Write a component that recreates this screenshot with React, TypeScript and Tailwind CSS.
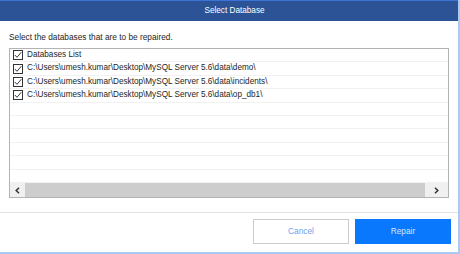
import React from 'react'

const paths = [
  'C:\\Users\\umesh.kumar\\Desktop\\MySQL Server 5.6\\data\\demo\\',
  'C:\\Users\\umesh.kumar\\Desktop\\MySQL Server 5.6\\data\\incidents\\',
  'C:\\Users\\umesh.kumar\\Desktop\\MySQL Server 5.6\\data\\op_db1\\',
]

function Check() {
  return (
    <span className="flex h-[10px] w-[10px] shrink-0 items-center justify-center border border-[#333] bg-white">
      <svg width="8" height="8" viewBox="0 0 8 8" fill="none">
        <path d="M0.8 4 L3 6.3 L7.3 1.2" stroke="#222" strokeWidth="0.9" />
      </svg>
    </span>
  )
}

function Chevron({ left }: { left?: boolean }) {
  return (
    <svg width="5" height="7" viewBox="0 0 5 7" fill="none">
      <path d={left ? 'M4 0.8 L1.2 3.5 L4 6.2' : 'M1 0.8 L3.8 3.5 L1 6.2'} stroke="#333" strokeWidth="1.5" />
    </svg>
  )
}

export default function App() {
  const rows = ['Databases List', ...paths]
  return (
    <div className="flex h-[254px] w-[460px] flex-col overflow-hidden border-r-2 border-b-2 border-[#a9cbf2] bg-white font-['Liberation_Sans',sans-serif] text-[#1e1e1e]">
      <div className="flex h-[21px] shrink-0 items-center justify-center border-t border-[#3d72d6] bg-[#2b5396] pl-[11px] text-[8.2px] text-white">
        Select Database
      </div>
      <div className="px-[9px] pt-[9px] text-[8.3px] leading-[14px]">Select the databases that are to be repaired.</div>
      <div className="mx-[9px] mt-[4px] flex h-[150px] flex-col border border-[#b3b3b3]">
        <div className="flex-1">
          {Array.from({ length: 10 }).map((_, i) => (
            <div key={i} className="flex h-[13.4px] items-center gap-[4px] border-b border-[#f1f1f1] pl-[3px] text-[8.2px]">
              {rows[i] !== undefined && <Check />}
              {rows[i] !== undefined && <span className="whitespace-nowrap leading-none">{rows[i]}</span>}
            </div>
          ))}
        </div>
        <div className="flex h-[14px] shrink-0 items-stretch bg-[#f0f0f0]">
          <div className="flex w-[15px] items-center justify-center">
            <Chevron left />
          </div>
          <div className="flex-1 bg-[#cdcdcd]" />
          <div className="flex w-[23px] items-center justify-center">
            <Chevron />
          </div>
        </div>
      </div>
      <div className="mt-[14px] h-px w-full bg-[#e3e3e3]" />
      <div className="flex flex-1 items-start justify-end gap-[6px] pr-[7px] pt-[6px] text-[8.3px]">
        <button className="h-[25px] w-[96px] border border-[#cbcbcb] bg-white text-[#6b9ff0]">Cancel</button>
        <button className="h-[25px] w-[96px] bg-[#0a78fc] text-[#d6e7ff]">Repair</button>
      </div>
    </div>
  )
}
